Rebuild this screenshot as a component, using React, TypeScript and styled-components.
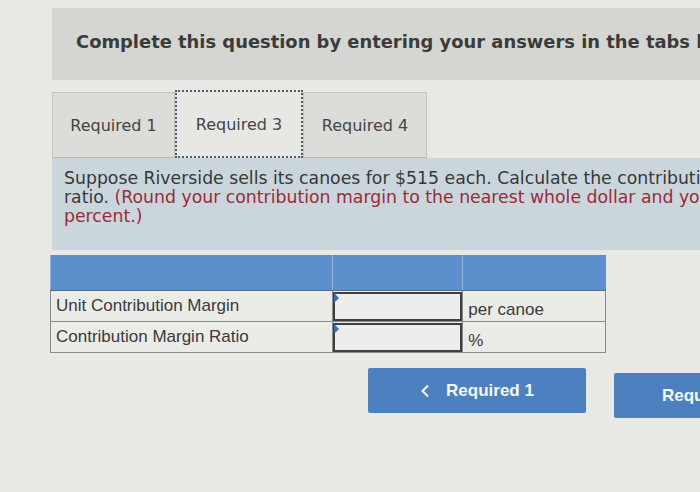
import styled, { createGlobalStyle } from "styled-components";

const Global = createGlobalStyle`
  html, body {
    margin: 0;
    padding: 0;
    background: #e8e8e5;
  }
  body {
    width: 700px;
    height: 492px;
    overflow: hidden;
  }
`;

const Page = styled.div`
  display: flex;
  flex-direction: column;
  padding: 8px 0 0 52px;
  width: 700px;
  height: 492px;
  box-sizing: border-box;
  overflow: hidden;
  font-family: "DejaVu Sans", Verdana, sans-serif;
  color: #3a3a3a;
`;

const Banner = styled.div`
  display: flex;
  align-items: center;
  height: 72px;
  padding: 0 0 6px 24px;
  box-sizing: border-box;
  background: #d5d5d2;
  white-space: nowrap;
  overflow: hidden;
`;

const Title = styled.h1`
  margin: 0;
  font-size: 17.9px;
  font-weight: bold;
  color: #3b3b3b;
`;

const TabRow = styled.div`
  display: flex;
  align-items: flex-end;
  margin-top: 10px;
  height: 68px;
`;

const Tab = styled.div<{ $active?: boolean; $w: number }>`
  display: flex;
  align-items: center;
  justify-content: center;
  width: ${(p) => p.$w}px;
  height: ${(p) => (p.$active ? 68 : 66)}px;
  box-sizing: border-box;
  font-size: 16px;
  color: #444;
  background: ${(p) => (p.$active ? "#e7e7e4" : "#dcdcd9")};
  border: ${(p) => (p.$active ? "2px dotted #4d5a6e" : "1px solid #c2c2bf")};
  border-bottom: ${(p) => (p.$active ? "2px dotted #4d5a6e" : "1px solid #b8b8b5")};
`;

const Panel = styled.div`
  background: #cad6dc;
  padding: 11px 0 18px 12px;
  height: 92px;
  box-sizing: border-box;
  white-space: nowrap;
  overflow: hidden;
`;

const Prompt = styled.p`
  margin: 0;
  font-size: 17.3px;
  line-height: 19px;
  color: #383838;
`;

const Hint = styled.span`
  color: #9b2a3a;
`;

const Table = styled.table`
  margin: 5px 0 0 -2px;
  width: 556px;
  border-collapse: collapse;
  font-family: "Liberation Sans", Arial, sans-serif;
  font-size: 17px;
  color: #3a3a3a;
`;

const HeadCell = styled.th<{ $w: number }>`
  width: ${(p) => p.$w}px;
  height: 35px;
  padding: 0;
  background: #5b90cc;
  border-left: 1px solid #8fb4dc;
  border-bottom: 1px solid #4f6f90;
`;

const Cell = styled.td`
  height: 31px;
  padding: 0 5px;
  background: #ebebe8;
  border: 1px solid #8a8a88;
  text-align: left;
  box-sizing: border-box;
`;

const UnitCell = styled(Cell)`
  padding-top: 7px;
  vertical-align: middle;
`;

const InputCell = styled.td`
  position: relative;
  padding: 0;
  border: 1px solid #8a8a88;
  background: #ececea;
`;

const InputBox = styled.div`
  height: 25px;
  margin: 0;
  border: 2px solid #3d3f44;
  background: #ededeb;
  &::before {
    content: "";
    position: absolute;
    left: 1px;
    top: 2px;
    border-top: 5px solid transparent;
    border-bottom: 5px solid transparent;
    border-left: 5px solid #3a6db0;
  }
`;

const Nav = styled.div`
  display: flex;
  align-items: flex-start;
  margin: 15px 0 0 316px;
  gap: 28px;
`;

const NavButton = styled.button<{ $w: number; $drop?: number }>`
  display: flex;
  align-items: center;
  justify-content: center;
  gap: 16px;
  flex: none;
  width: ${(p) => p.$w}px;
  height: 45px;
  margin-top: ${(p) => p.$drop ?? 0}px;
  padding: 0;
  border: none;
  border-radius: 2px;
  background: #4c80bf;
  color: #f4f6fa;
  font-family: "Liberation Sans", Arial, sans-serif;
  font-size: 17px;
  font-weight: bold;
`;

const NextButton = styled(NavButton)`
  justify-content: flex-start;
  padding-left: 48px;
`;

const Chevron = () => (
  <svg width="10" height="14" viewBox="0 0 10 14">
    <path d="M8 1.5 L2.5 7 L8 12.5" fill="none" stroke="#f4f6fa" strokeWidth="2" />
  </svg>
);

export default function App() {
  return (
    <>
      <Global />
      <Page>
        <Banner>
          <Title>Complete this question by entering your answers in the tabs below.</Title>
        </Banner>
        <TabRow>
          <Tab $w={123}>Required 1</Tab>
          <Tab $w={128} $active>
            Required 3
          </Tab>
          <Tab $w={124}>Required 4</Tab>
        </TabRow>
        <Panel>
          <Prompt>Suppose Riverside sells its canoes for $515 each. Calculate the contribution margin and contribution margin</Prompt>
          <Prompt>
            ratio. <Hint>(Round your contribution margin to the nearest whole dollar and your contribution margin ratio to the nearest whole</Hint>
          </Prompt>
          <Prompt>
            <Hint>percent.)</Hint>
          </Prompt>
        </Panel>
        <Table>
          <thead>
            <tr>
              <HeadCell $w={283} />
              <HeadCell $w={130} />
              <HeadCell $w={143} />
            </tr>
          </thead>
          <tbody>
            <tr>
              <Cell>Unit Contribution Margin</Cell>
              <InputCell>
                <InputBox />
              </InputCell>
              <UnitCell>per canoe</UnitCell>
            </tr>
            <tr>
              <Cell>Contribution Margin Ratio</Cell>
              <InputCell>
                <InputBox />
              </InputCell>
              <UnitCell>%</UnitCell>
            </tr>
          </tbody>
        </Table>
        <Nav>
          <NavButton $w={218}>
            <Chevron />
            Required 1
          </NavButton>
          <NextButton $w={200} $drop={5}>
            Required 4
          </NextButton>
        </Nav>
      </Page>
    </>
  );
}
